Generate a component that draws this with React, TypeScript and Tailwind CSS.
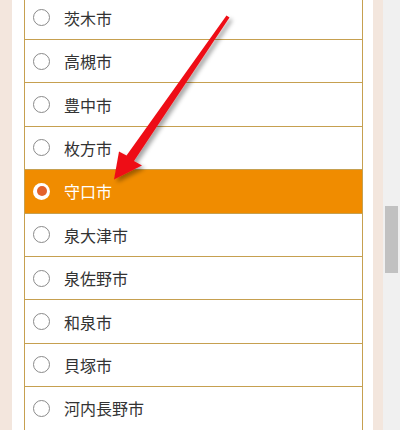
import React from 'react';

const cities = [
    '茨木市',
    '高槻市',
    '豊中市',
    '枚方市',
    '守口市',
    '泉大津市',
    '泉佐野市',
    '和泉市',
    '貝塚市',
    '河内長野市',
];

const selected = '守口市';

const Radio = ({ checked }: { checked: boolean }) =>
    checked ? (
        <span className="flex items-center justify-center w-[17px] h-[17px] rounded-full bg-white shrink-0">
            <span className="w-[10px] h-[10px] rounded-full bg-[#e3622c]" />
        </span>
    ) : (
        <span className="w-[17px] h-[17px] rounded-full border border-[#8a8a8a] bg-white shrink-0" />
    );

const Arrow = () => (
    <svg className="absolute left-0 top-0 pointer-events-none" width="400" height="430" viewBox="0 0 400 430">
        <defs>
            <filter id="shadow" x="-20%" y="-20%" width="140%" height="140%">
                <feDropShadow dx="3" dy="3" stdDeviation="2" floodColor="#000" floodOpacity="0.35" />
            </filter>
        </defs>
        <polygon
            filter="url(#shadow)"
            fill="#ee1118"
            points="226.5,15.5 229.5,17.5 134,161 142,165.5 114,179.5 119,151.5 126.5,155.5"
        />
    </svg>
);

export default function App() {
    return (
        <div className="relative w-[400px] h-[430px] overflow-hidden bg-white flex" style={{ fontFamily: '"Noto Sans CJK JP", "Noto Sans", sans-serif' }}>
            <div className="w-[12px] bg-[#f3e6dd]" />
            <div className="w-[12px] bg-white" />
            <div className="w-[339px] border-x border-[#c6a050] mt-[-3.4px]">
                {cities.map((city) => {
                    const on = city === selected;
                    return (
                        <div
                            key={city}
                            className={
                                on
                                    ? 'flex items-center gap-[14px] pl-[8px] h-[43.4px] border-b border-[#c6a050] bg-[#f08c00] text-white'
                                    : 'flex items-center gap-[14px] pl-[8px] h-[43.4px] border-b border-[#c6a050] bg-white text-[#333]'
                            }
                        >
                            <Radio checked={on} />
                            <span className="text-[16px] leading-none">{city}</span>
                        </div>
                    );
                })}
            </div>
            <div className="w-[10px] bg-white" />
            <div className="w-[10px] bg-[#f3e6dd]" />
            <div className="w-[17px] bg-[#f0f0f0] pt-[206px] pl-[2px]">
                <div className="w-[13px] h-[67px] bg-[#c1c1c1]" />
            </div>
            <Arrow />
        </div>
    );
}
